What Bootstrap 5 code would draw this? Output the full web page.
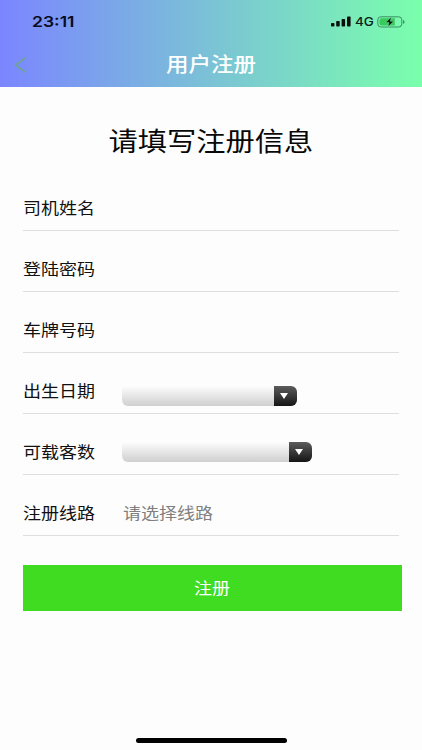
<!DOCTYPE html>
<html lang="zh-CN">
<head>
<meta charset="utf-8">
<meta name="viewport" content="width=device-width, initial-scale=1">
<title>用户注册</title>
<link href="https://cdn.jsdelivr.net/npm/bootstrap@5.3.0/dist/css/bootstrap.min.css" rel="stylesheet">
<style>
body{font-family:"Liberation Sans","Noto Sans CJK SC",sans-serif;background:#fdfdfd;color:#111}
.screen{height:750px}
.top-area{height:87px;background:linear-gradient(90deg,#7b86ff,#7affac)}
.status{height:42px;padding:1px 17px 0 32px}
.clock{font:600 15px/1 Inter,sans-serif;color:#080c20;transform:scaleX(1.17);transform-origin:left}
.network{font:500 11.5px/12px Inter,sans-serif;color:#0b2016;width:18px;transform:scaleX(1.17);transform-origin:left;padding-top:1px}
.title-row{height:45px;padding-left:14px}
.wide{display:inline-block;transform:scaleX(1.125);white-space:nowrap}
.wide-start{transform-origin:left}
.page-title{font-size:20px;line-height:30px;font-weight:500;padding-right:28px}
.heading{font-size:26px;line-height:40px;margin-top:35px;margin-bottom:8px;color:#080808}
.fields{padding:0 23px}
.field{height:61px;border-bottom:1px solid #dedede;padding-top:27px}
.field-label{width:99px;font-size:16px;line-height:24px}
.picker{height:20px;border-radius:2px 6px 6px 6px;overflow:hidden;background:linear-gradient(#fdfdfd,#e8e8e8 45%,#cfcfcf)}
.picker-date{width:175px;margin-top:6px}
.picker-seats{width:190px;margin-top:1px}
.picker-arrow{width:23px;background:linear-gradient(#5c5c5c,#151515);padding-right:3px}
.hint{color:#808080;padding-left:1px;font-size:16px;line-height:24px}
.submit{height:46px;margin:29px 20px 0 23px;background:#40dc22;font-size:16px;line-height:24px}
.submit .wide{padding-top:2px}
.home-bar{width:151px;height:5px;background:#000;margin-bottom:7px}
</style>
</head>
<body>
<main class="screen d-flex flex-column overflow-hidden">
  <header class="top-area flex-shrink-0">
    <div class="status d-flex justify-content-between align-items-center">
      <span class="clock">23:11</span>
      <div class="d-flex align-items-center">
        <svg width="20" height="11" viewBox="0 0 20 11" fill="#07100c"><rect x="0" y="7" width="3.4" height="3.5" rx=".8"/><rect x="5.2" y="5" width="3.5" height="5.5" rx=".8"/><rect x="10.6" y="3" width="3.5" height="7.5" rx=".8"/><rect x="16" y=".5" width="3.6" height="10" rx=".8"/></svg>
        <span class="network ms-1 me-1">4G</span>
        <svg class="ms-px" width="28" height="12" viewBox="0 0 28 12"><rect x=".8" y=".8" width="24" height="10.2" rx="3" fill="none" stroke="#3c8e60" stroke-width="1"/><path d="M4.5 2.2H17.8V9.6H4.5Q2.5 9.6 2.5 7.8V4Q2.5 2.2 4.5 2.2Z" fill="#38ca5b"/><path d="M26 4Q27.6 4.5 27.6 5.9T26 7.8Z" fill="#3c8e60"/><path d="M14.2 1L8.8 6.6H12L11 11L16.7 5.2H13.4Z" fill="#061009" stroke="#70eba8" stroke-width=".5"/></svg>
      </div>
    </div>
    <div class="title-row d-flex align-items-center">
      <svg width="13" height="18" viewBox="0 0 13 18" fill="none" stroke="#6fa396" stroke-width="1.6"><path d="M12 1.5L1.5 9L12 16.5"/></svg>
      <h1 class="page-title text-white text-center flex-fill m-0"><span class="wide">用户注册</span></h1>
    </div>
  </header>
  <h2 class="heading text-center fw-normal"><span class="wide">请填写注册信息</span></h2>
  <form class="fields">
    <div class="field d-flex align-items-start"><label class="field-label"><span class="wide wide-start">司机姓名</span></label></div>
    <div class="field d-flex align-items-start"><label class="field-label"><span class="wide wide-start">登陆密码</span></label></div>
    <div class="field d-flex align-items-start"><label class="field-label"><span class="wide wide-start">车牌号码</span></label></div>
    <div class="field d-flex align-items-start"><label class="field-label"><span class="wide wide-start">出生日期</span></label>
      <div class="picker picker-date d-flex justify-content-end"><span class="picker-arrow d-flex align-items-center justify-content-center"><svg width="8" height="6" viewBox="0 0 8 6"><path d="M0 0H8L4 6Z" fill="#fff"/></svg></span></div>
    </div>
    <div class="field d-flex align-items-start"><label class="field-label"><span class="wide wide-start">可载客数</span></label>
      <div class="picker picker-seats d-flex justify-content-end"><span class="picker-arrow d-flex align-items-center justify-content-center"><svg width="8" height="6" viewBox="0 0 8 6"><path d="M0 0H8L4 6Z" fill="#fff"/></svg></span></div>
    </div>
    <div class="field d-flex align-items-start"><label class="field-label"><span class="wide wide-start">注册线路</span></label><span class="hint"><span class="wide wide-start">请选择线路</span></span></div>
  </form>
  <button type="button" class="submit btn rounded-0 border-0 p-0 text-white"><span class="wide">注册</span></button>
  <div class="home-bar rounded-pill mt-auto mx-auto flex-shrink-0"></div>
</main>
<script src="https://cdn.jsdelivr.net/npm/bootstrap@5.3.0/dist/js/bootstrap.bundle.min.js"></script>
</body>
</html>
